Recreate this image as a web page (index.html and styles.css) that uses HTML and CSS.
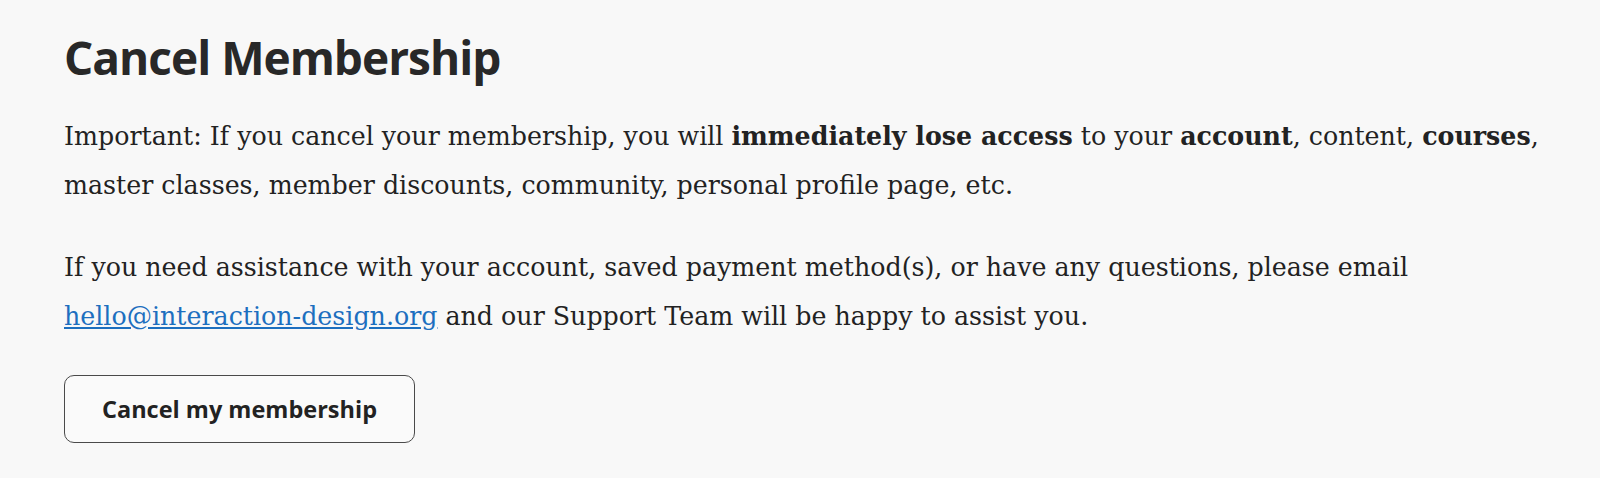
FILE: index.html
```html
<!DOCTYPE html>
<html lang="en">
<head>
  <meta charset="UTF-8">
  <title>Cancel Membership</title>
  <link rel="stylesheet" href="styles.css">
</head>
<body>
  <div class="page">
    <h1 class="title">Cancel Membership</h1>
    <p class="text">Important: If you cancel your membership, you will <strong>immediately lose access</strong> to your <strong>account</strong>, content, <strong>courses</strong>, master classes, member discounts, community, personal profile page, etc.</p>
    <p class="text last">If you need assistance with your account, saved payment method(s), or have any questions, please email <a href="mailto:hello@interaction-design.org">hello@interaction-design.org</a> and our Support Team will be happy to assist you.</p>
    <button class="cancel-btn">Cancel my membership</button>
  </div>
</body>
</html>
```

FILE: styles.css
```css
body {
  margin: 0;
  background: #f8f8f8;
  color: #222;
}
.page {
  padding: 27px 16px 0 64px;
}
.title {
  font-family: "Open Sans", sans-serif;
  font-weight: 700;
  font-size: 46px;
  letter-spacing: -1px;
  line-height: 60px;
  margin: 0 0 25px 0;
  color: #282828;
}
.text {
  font-family: "DejaVu Serif", serif;
  font-size: 25.3px;
  line-height: 49px;
  margin: 0 0 33px 0;
}
.text.last { margin-bottom: 34px; }
.text strong { font-weight: 700; }
.text a { color: #1d6fbf; }
.cancel-btn {
  font-family: "Open Sans", sans-serif;
  font-weight: 700;
  font-size: 23.5px;
  color: #222;
  background: #fafafa;
  border: 1px solid #4a4a4a;
  border-radius: 10px;
  width: 351px;
  height: 68px;
  padding: 0;
  cursor: pointer;
}
```
